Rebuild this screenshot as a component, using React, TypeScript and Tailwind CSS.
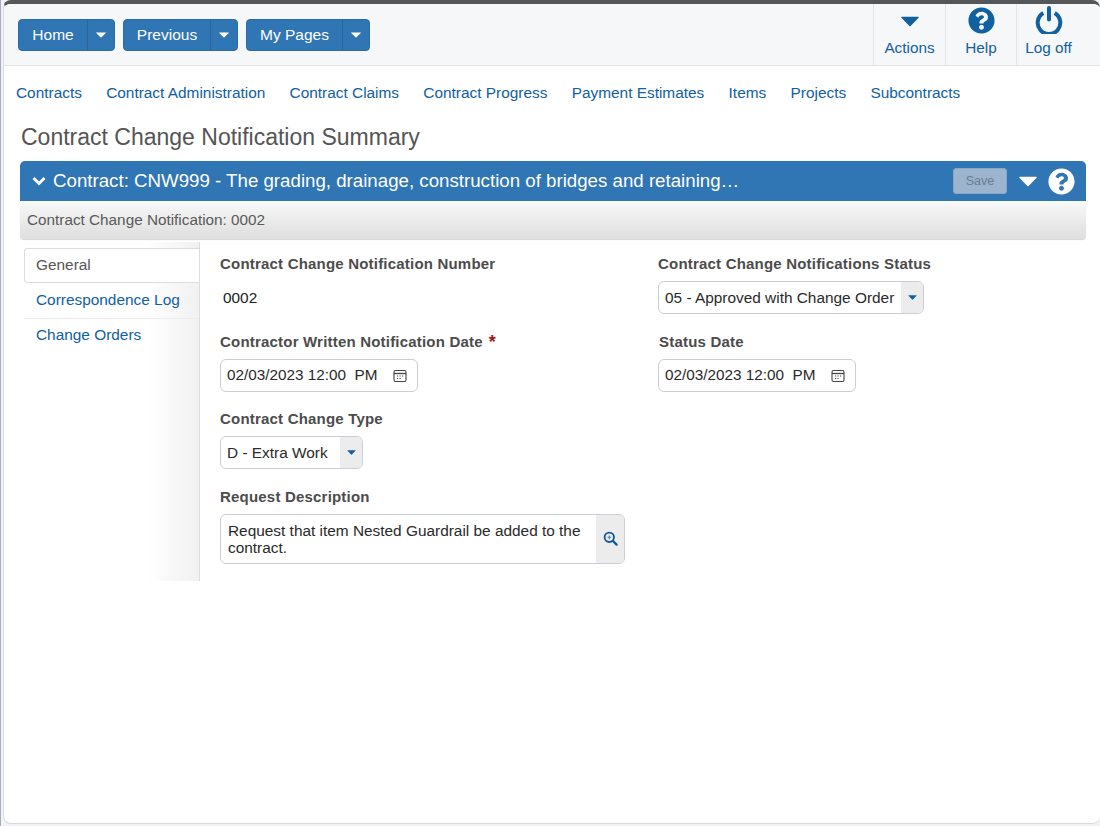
const font = "font-['Liberation_Sans',Arial,sans-serif]"

function Caret({ className }: { className: string }) {
  return (
    <svg viewBox="0 0 10 6" className={className} fill="currentColor">
      <path d="M0.4 0.4h9.2a.3 .3 0 0 1 .2 .5L5.2 5.6a.3 .3 0 0 1 -.4 0L.2 .9a.3 .3 0 0 1 .2 -.5z" />
    </svg>
  )
}

function HelpIcon({ className }: { className: string }) {
  return (
    <svg viewBox="0 0 512 512" className={className} fill="currentColor">
      <path d="M504 256c0 137-111 248-248 248S8 393 8 256C8 119 119 8 256 8s248 111 248 248zM262.700 90c-54.500 0-89.300 23-116.500 63.800-3.500 5.300-2.400 12.400 2.700 16.300l34.700 26.300c5.200 3.900 12.600 3 16.700-2.100 17.900-22.700 30.100-35.800 57.300-35.800 20.400 0 45.700 13.100 45.700 33 0 15-12.400 22.700-32.600 34-23.600 13.200-54.800 29.700-54.800 70.900V302c0 6.600 5.400 12 12 12h56c6.600 0 12-5.400 12-12v-1.300c0-28.600 83.500-29.800 83.500-107.200 0-58.300-60.500-102.500-117.300-102.500zM256 338c-25.500 0-46.200 20.700-46.200 46.200 0 25.500 20.700 46.200 46.200 46.200s46.200-20.700 46.200-46.200c0-25.500-20.700-46.200-46.200-46.200z" />
    </svg>
  )
}

function PowerIcon() {
  return (
    <svg viewBox="0 0 28 28" className="mt-[-3px] h-[28px] w-[28px]" fill="none" stroke="currentColor" strokeWidth="4">
      <path d="M8.300 7a11.300 11.300 0 1 0 11.400 0" />
      <path d="M14 2v11.500" strokeLinecap="round" />
    </svg>
  )
}

function CalendarIcon() {
  return (
    <svg viewBox="0 0 14 14" className="h-[14px] w-[14px] text-[#444]" fill="none" stroke="currentColor">
      <rect x="1" y="1.500" width="12" height="11" rx="1.500" strokeWidth="1.100" />
      <path d="M1 4.500h12" strokeWidth="1.300" />
      <path d="M4 7h1.200M6.500 7h1.200M9 7h1.200M4 9.500h1.200M6.500 9.500h1.200" strokeWidth="1" />
    </svg>
  )
}

function ZoomIcon() {
  return (
    <svg viewBox="0 0 16 16" className="mt-[-2px] h-[15px] w-[15px] text-[#0f5a9c]" fill="none" stroke="currentColor">
      <circle cx="6.700" cy="6.700" r="5" strokeWidth="2" />
      <path d="M10.500 10.500l4 4" strokeWidth="2.400" strokeLinecap="round" />
      <path d="M4.700 6.700h4M6.700 4.700v4" strokeWidth="1.200" stroke="#5d7f9f" />
    </svg>
  )
}

function SplitButton({ label, w }: { label: string; w: string }) {
  return (
    <div className="flex h-8 items-stretch rounded-[4px] border border-[#2c6ca6] bg-[#3075b4] text-[15.500px] text-white">
      <div className={`flex items-center justify-center ${w}`}>{label}</div>
      <div className="flex w-[27px] items-center justify-center border-l border-[#2a659c]">
        <Caret className="h-[6px] w-[10px]" />
      </div>
    </div>
  )
}

function ToolItem({ label, w, icon }: { label: string; w: string; icon: React.ReactNode }) {
  return (
    <div className={`flex h-full flex-col items-center border-l border-[#e3e4e6] text-[#11609f] ${w}`}>
      <div className="flex h-[35px] w-full items-center justify-center">{icon}</div>
      <div className="mt-[-1px] text-[15.300px] leading-5">{label}</div>
    </div>
  )
}

function Label({ children }: { children: React.ReactNode }) {
  return <div className="text-[15px] font-bold leading-5 tracking-[0.2px] text-[#4c4c4c]">{children}</div>
}

function ComboBox({ value, w }: { value: string; w: string }) {
  return (
    <div className={`mt-[7px] flex h-[33px] items-stretch overflow-hidden rounded-[6px] border border-[#c9ced6] bg-white ${w}`}>
      <div className="flex flex-1 items-center pl-[6px] text-[15.400px] text-[#2a2a2a]">{value}</div>
      <div className="flex w-[22px] items-center justify-center bg-[#ececec] text-[#11609f]">
        <Caret className="h-[5px] w-[9px]" />
      </div>
    </div>
  )
}

function DateBox({ value }: { value: string }) {
  return (
    <div className="mt-[7px] flex h-[33px] w-[198px] items-center justify-between rounded-[6px] border border-[#c9ced6] bg-white pl-[6px] pr-[10px] text-[15.300px] text-[#2a2a2a]">
      <span className="whitespace-pre">{value}</span>
      <CalendarIcon />
    </div>
  )
}

export default function App() {
  const links = ['Contracts', 'Contract Administration', 'Contract Claims', 'Contract Progress', 'Payment Estimates', 'Items', 'Projects', 'Subcontracts']

  return (
    <div className={`${font} h-[826px] w-[1100px] overflow-hidden bg-[#a9adb8] pl-[1px]`}>
      <div className="h-full bg-[#f1f2f5] pl-[2px]">
        <div className="h-[824px] overflow-hidden rounded-[8px] border-t-4 border-b border-l border-t-[#54565a] border-b-[#d9d9d9] border-l-[#dcdde2] bg-white">
          <header className="flex h-[62px] items-stretch justify-between border-b border-[#e3e4e6] bg-[#f6f7f9]">
            <div className="flex gap-2 pl-[14px] pt-[15px]">
              <SplitButton label="Home" w="w-[68px]" />
              <SplitButton label="Previous" w="w-[86px]" />
              <SplitButton label="My Pages" w="w-[95px]" />
            </div>
            <div className="flex">
              <ToolItem label="Actions" w="w-[72px]" icon={<Caret className="mt-[-1px] h-[11px] w-[18px]" />} />
              <ToolItem label="Help" w="w-[71px]" icon={<HelpIcon className="mt-[-2px] h-[27px] w-[27px]" />} />
              <ToolItem label="Log off" w="w-[64px]" icon={<PowerIcon />} />
              <div className="w-[20px]" />
            </div>
          </header>

          <nav className="flex gap-[24.300px] pl-[12px] pt-[17px] text-[15.400px] leading-5 text-[#11609f]">
            {links.map((l) => (
              <span key={l}>{l}</span>
            ))}
          </nav>

          <h1 className="pl-[17px] pt-[19px] text-[23px] font-normal leading-[30px] text-[#555]">
            Contract Change Notification Summary
          </h1>

          <div className="ml-[16px] mt-[9px] w-[1066px]">
            <div className="flex h-10 items-center justify-between rounded-t-[5px] bg-[#3075b4] pl-[12px] pr-[11px] text-white">
              <div className="flex items-center gap-[7px] text-[18.700px]">
                <svg viewBox="0 0 14 10" className="h-[10px] w-[14px]" fill="none" stroke="currentColor" strokeWidth="2.800">
                  <path d="M1.500 2l5.500 5.500L12.500 2" />
                </svg>
                <span>Contract: CNW999 - The grading, drainage, construction of bridges and retaining…</span>
              </div>
              <div className="flex items-center">
                <div className="flex h-[26px] w-[54px] items-center justify-center rounded-[3px] border border-[#8aa6c6] bg-[#9db4ce] text-[12.500px] text-[#6a7d92]">
                  Save
                </div>
                <Caret className="ml-[12px] h-[11px] w-[18px]" />
                <HelpIcon className="ml-[11px] h-[27px] w-[27px]" />
              </div>
            </div>
            <div className="flex h-[38px] items-center rounded-b-[4px] bg-gradient-to-b from-[#f9f9f9] to-[#dedede] pl-[7px] text-[15.300px] text-[#5a5a5a] shadow-[0_1px_1px_#d5d5d5]">
              Contract Change Notification: 0002
            </div>
          </div>

          <div className="flex items-start">
            <aside className="ml-[20px] mt-[3px] h-[339px] w-[176px] border-r border-[#dcdcdc] bg-gradient-to-r from-white from-70% to-[#f1f1f1] pt-[6px] text-[15.400px]">
              <div className="flex h-[35px] items-center rounded-l-[4px] border border-r-0 border-[#dcdcdc] bg-white pb-[2px] pl-[11px] text-[#555]">
                General
              </div>
              <div className="flex h-[36px] items-center border-b border-[#ececec] pb-[2px] pl-3 text-[#11609f]">Correspondence Log</div>
              <div className="flex h-[33px] items-center pb-[2px] pl-3 text-[#11609f]">Change Orders</div>
            </aside>

            <main className="grid grid-cols-[438px_1fr] pl-[20px] pt-[15px]">
              <div className="flex flex-col">
                <Label>Contract Change Notification Number</Label>
                <div className="flex h-[48px] items-center pl-[3px] text-[15.400px] leading-5 text-[#222]">0002</div>
                <div className="mt-[10px] flex gap-[6px]">
                  <Label>Contractor Written Notification Date</Label>
                  <span className="text-[18px] font-bold leading-5 text-[#a01515]">*</span>
                </div>
                <DateBox value="02/03/2023 12:00  PM" />
                <div className="mt-[17px]">
                  <Label>Contract Change Type</Label>
                </div>
                <ComboBox value="D - Extra Work" w="w-[143px]" />
                <div className="mt-[18px]">
                  <Label>Request Description</Label>
                </div>
                <div className="mt-[7px] flex h-[50px] w-[405px] items-stretch overflow-hidden rounded-[6px] border border-[#c9ced6] bg-white">
                  <div className="flex-1 pl-[7px] pr-2 pt-[7px] text-[15.400px] leading-[17px] text-[#2a2a2a]">
                    Request that item Nested Guardrail be added to the contract.
                  </div>
                  <div className="flex w-[28px] items-center justify-center bg-[#ececec]">
                    <ZoomIcon />
                  </div>
                </div>
              </div>
              <div className="flex flex-col">
                <Label>Contract Change Notifications Status</Label>
                <ComboBox value="05 - Approved with Change Order" w="w-[266px]" />
                <div className="mt-[18px] pl-[1px]">
                  <Label>Status Date</Label>
                </div>
                <DateBox value="02/03/2023 12:00  PM" />
              </div>
            </main>
          </div>
        </div>
      </div>
    </div>
  )
}
